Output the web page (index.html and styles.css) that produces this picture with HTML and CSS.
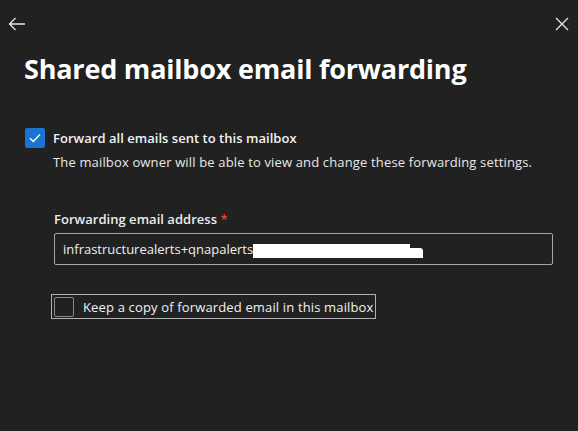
FILE: index.html
```html
<!DOCTYPE html>
<html lang="en">
<head>
<meta charset="utf-8">
<title>Shared mailbox email forwarding</title>
<link rel="stylesheet" href="styles.css">
</head>
<body>
<div class="panel">
  <div class="topbar">
    <button class="icon-btn" aria-label="Back">
      <svg width="18" height="14" viewBox="0 0 18 14"><path d="M7.5 1 L1.5 7 L7.5 13 M1.5 7 H17" fill="none" stroke="#e6e6e6" stroke-width="1.3"/></svg>
    </button>
    <button class="icon-btn" aria-label="Close">
      <svg width="14" height="14" viewBox="0 0 14 14"><path d="M1 1 L13 13 M13 1 L1 13" fill="none" stroke="#e6e6e6" stroke-width="1.3"/></svg>
    </button>
  </div>
  <h1 class="title">Shared mailbox email forwarding</h1>

  <div class="check-row">
    <span class="box checked">
      <svg width="12" height="10" viewBox="0 0 12 10"><path d="M1 5.2 L4.3 8.4 L11 1.6" fill="none" stroke="#fff" stroke-width="1.4"/></svg>
    </span>
    <span class="check-label strong">Forward all emails sent to this mailbox</span>
  </div>
  <p class="desc">The mailbox owner will be able to view and change these forwarding settings.</p>

  <div class="field">
    <label class="field-label">Forwarding email address <span class="req">*</span></label>
    <div class="input"><span class="value">infrastructurealerts+qnapalerts</span><span class="redact"><span class="redact-a"></span><span class="redact-b"></span></span></div>
  </div>

  <div class="copy-row">
    <span class="box"></span>
    <span class="check-label plain">Keep a copy of forwarded email in this mailbox</span>
  </div>
</div>
</body>
</html>
```
FILE: styles.css
```css
html, body {
  margin: 0;
  padding: 0;
  background: #212121;
  height: 100%;
}
body {
  font-family: "Open Sans", "Noto Sans", sans-serif;
  color: #ffffff;
}
.topbar {
  display: flex;
  justify-content: space-between;
  align-items: center;
  padding: 16px 9px 0 8px;
  height: 16px;
}
.icon-btn {
  background: none;
  border: 0;
  padding: 0;
  display: flex;
  align-items: center;
  cursor: pointer;
}
.title {
  margin: 19px 0 0 24px;
  font-size: 27px;
  font-weight: 700;
  letter-spacing: -0.2px;
  line-height: 36px;
  color: #ffffff;
}
.check-row {
  display: flex;
  align-items: center;
  gap: 8px;
  margin: 41px 0 0 25px;
}
.box {
  width: 18px;
  height: 18px;
  border: 1px solid #8a8a8a;
  border-radius: 2px;
  display: inline-flex;
  align-items: center;
  justify-content: center;
  box-sizing: content-box;
  flex: none;
}
.box.checked {
  width: 20px;
  height: 20px;
  border: 0;
  background: #1a74d4;
}
.check-label {
  font-size: 13px;
  color: #f2f2f2;
  letter-spacing: 0.03px;
}
.check-label.strong {
  font-weight: 600;
}
.check-label.plain {
  letter-spacing: 0.15px;
}
.desc {
  margin: 5px 0 0 53px;
  font-size: 13px;
  color: #e8e8e8;
  letter-spacing: 0.15px;
}
.field {
  margin: 39px 0 0 54px;
  width: 499px;
}
.field-label {
  display: block;
  font-size: 13px;
  font-weight: 600;
  color: #ececec;
  letter-spacing: 0.03px;
}
.req {
  color: #e0481f;
}
.input {
  margin-top: 5px;
  height: 30px;
  border: 1px solid #a8a8a8;
  border-radius: 2px;
  display: flex;
  align-items: center;
  padding-left: 8px;
}
.value {
  font-size: 13px;
  color: #f0f0f0;
  letter-spacing: 0;
}
.redact {
  display: inline-flex;
  align-items: flex-end;
  height: 15px;
  margin-top: 2px;
}
.redact-a {
  width: 157px;
  height: 14px;
  background: #ffffff;
}
.redact-b {
  width: 13px;
  height: 10px;
  background: #ffffff;
  border-top-right-radius: 3px;
}
.copy-row {
  display: inline-flex;
  align-items: center;
  gap: 9px;
  margin: 29px 0 0 51px;
  padding: 2px 1px 1px 2px;
  border: 1px solid #b0b0b0;
}
```
